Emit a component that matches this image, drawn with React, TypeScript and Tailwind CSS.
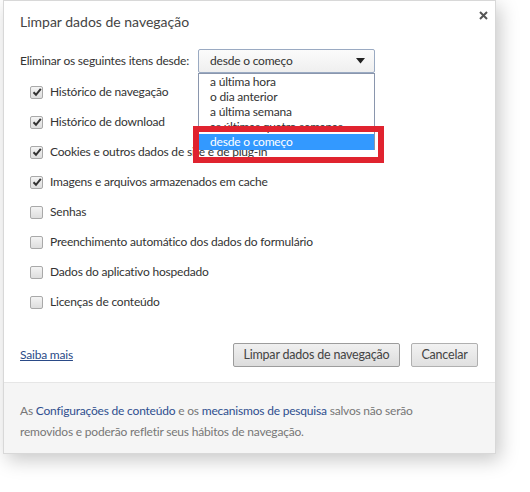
import React from 'react';

const items = [
  { label: 'Histórico de navegação', checked: true },
  { label: 'Histórico de download', checked: true },
  { label: 'Cookies e outros dados de site e de plug-in', checked: true },
  { label: 'Imagens e arquivos armazenados em cache', checked: true },
  { label: 'Senhas', checked: false },
  { label: 'Preenchimento automático dos dados do formulário', checked: false },
  { label: 'Dados do aplicativo hospedado', checked: false },
  { label: 'Licenças de conteúdo', checked: false },
];

const periods = ['a última hora', 'o dia anterior', 'a última semana', 'as últimas quatro semanas'];

function Checkbox({ checked }: { checked: boolean }) {
  return (
    <span className="flex h-[13px] w-[13px] items-center justify-center rounded-[2px] border border-[#a9a9a9] bg-gradient-to-b from-[#f4f4f4] to-[#dedede]">
      {checked && (
        <svg className="h-[10px] w-[10px]" viewBox="0 0 10 10">
          <path d="M1.5 5.2 L4 7.8 L8.8 1.8" fill="none" stroke="#333" strokeWidth={2} />
        </svg>
      )}
    </span>
  );
}

export default function App() {
  return (
    <div className="min-h-[492px] w-[530px] bg-white" style={{ fontFamily: 'Lato, "Open Sans", sans-serif' }}>
      <div className="relative ml-[3px] w-[493px] border border-[#d8d8d8] bg-white shadow-[4px_6px_18px_rgba(0,0,0,0.22)]">
        {/* Close */}
        <button className="absolute right-[6px] top-[9px] flex h-[11px] w-[11px] items-center justify-center">
          <svg className="h-[9px] w-[9px]" viewBox="0 0 9 9">
            <path d="M1 1 L8 8 M8 1 L1 8" stroke="#555" strokeWidth={2} />
          </svg>
        </button>

        <div className="px-[16px] pt-[11px] pb-[15px] text-[12px] tracking-[-0.2px] text-[#333]">
          <h2 className="text-[14px] leading-[20px] tracking-[0px] text-[#444]">Limpar dados de navegação</h2>

          {/* Period select */}
          <div className="mt-[17px] flex h-[24px] items-center">
            <span className="w-[178px] shrink-0 whitespace-nowrap">Eliminar os seguintes itens desde:</span>
            <div className="relative">
              <div className="flex h-[24px] w-[177px] items-center justify-between rounded-[2px] border border-[#9aaac2] bg-gradient-to-b from-[#fbfbfb] to-[#efefef] pl-[11px] pr-[9px]">
                <span>desde o começo</span>
                <svg className="h-[6px] w-[9px]" viewBox="0 0 9 6">
                  <path d="M0 0 H9 L4.5 5.5 Z" fill="#222" />
                </svg>
              </div>
              {/* Open list */}
              <div className="absolute left-0 top-[24px] z-10 w-[177px] border-x border-t border-[#8a96ad] bg-white">
                {periods.map((p) => (
                  <div key={p} className="h-[15px] overflow-hidden whitespace-nowrap pl-[11px] leading-[15px]">
                    {p}
                  </div>
                ))}
                <div className="h-[16px] bg-[#3399ff] pl-[11px] leading-[16px] text-white">desde o começo</div>
              </div>
              {/* Highlight */}
              <div className="pointer-events-none absolute left-[-5px] top-[77px] z-20 h-[37px] w-[191px] border-[6px] border-[#e0232f]" />
            </div>
          </div>

          {/* Data types */}
          <ul className="mt-[4px]">
            {items.map((it) => (
              <li key={it.label} className="flex h-[30px] items-center pl-[10px]">
                <Checkbox checked={it.checked} />
                <span className="ml-[7px]">{it.label}</span>
              </li>
            ))}
          </ul>

          {/* Actions */}
          <div className="mt-[26px] flex h-[24px] items-center">
            <a href="#" className="text-[#2a4a87] underline">Saiba mais</a>
            <div className="ml-auto flex gap-[11px] pr-[1px]">
              <button className="h-[24px] w-[167px] rounded-[2px] border border-[#9c9c9c] bg-gradient-to-b from-[#f0f0f0] to-[#dcdcdc] text-[12.5px] text-[#444]">
                Limpar dados de navegação
              </button>
              <button className="h-[24px] w-[67px] rounded-[2px] border border-[#b0b0b0] bg-gradient-to-b from-[#f2f2f2] to-[#e0e0e0] text-[12.5px] text-[#444]">
                Cancelar
              </button>
            </div>
          </div>
        </div>

        {/* Footer */}
        <div className="border-t border-[#e6e6e6] bg-[#f5f5f5] px-[16px] pt-[17px] pb-[11px] text-[12px] leading-[21px] tracking-[-0.2px] text-[#777]">
          As <a href="#" className="text-[#2f4f8f]">Configurações de conteúdo</a> e os{' '}
          <a href="#" className="text-[#2f4f8f]">mecanismos de pesquisa</a> salvos não serão
          <br />
          removidos e poderão refletir seus hábitos de navegação.
        </div>
      </div>
    </div>
  );
}
